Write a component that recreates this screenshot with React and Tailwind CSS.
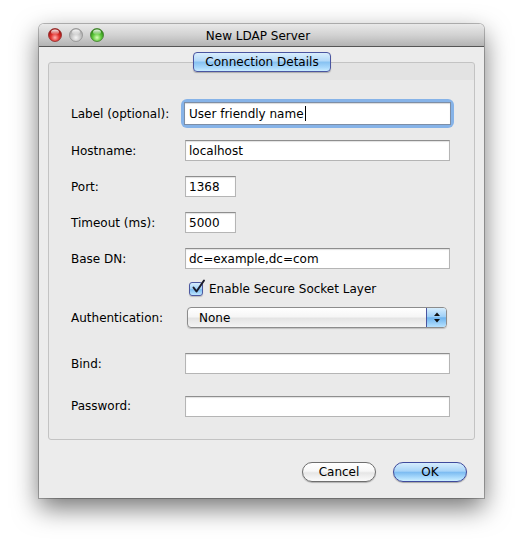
import React from "react";

function Light({ color }) {
  const c = {
    red: ["#ffb3b0", "#e0302c", "#a01412", "#8e2a28"],
    gray: ["#f4f4f4", "#c9c9c9", "#a9a9a9", "#8f8f8f"],
    green: ["#d8ffb8", "#5cc63a", "#2f8a16", "#3f7c2a"],
  }[color];
  const id = "g" + color;
  return (
    <svg width="14" height="14" viewBox="0 0 14 14">
      <defs>
        <radialGradient id={id} cx="50%" cy="70%" r="60%">
          <stop offset="0%" stopColor={c[0]} />
          <stop offset="55%" stopColor={c[1]} />
          <stop offset="100%" stopColor={c[2]} />
        </radialGradient>
        <linearGradient id={id + "h"} x1="0" y1="0" x2="0" y2="1">
          <stop offset="0%" stopColor="#ffffff" stopOpacity="0.95" />
          <stop offset="100%" stopColor="#ffffff" stopOpacity="0.1" />
        </linearGradient>
      </defs>
      <circle cx="7" cy="7" r="6.5" fill={`url(#${id})`} stroke={c[3]} strokeWidth="0.8" />
      <ellipse cx="7" cy="4" rx="4" ry="2.6" fill={`url(#${id}h)`} />
    </svg>
  );
}

function Field({ w = "w-[265px]", children, focused }) {
  if (focused) {
    return (
      <div className="w-[267px] h-[23px] -ml-px rounded-[3px] shadow-[0_0_0_3px_#86b3e8] flex items-center">
        <div className="w-full h-full bg-white border border-[#7d8ea6] flex items-center pl-[4px] shadow-[inset_0_1px_1px_rgba(0,0,0,0.15)]">
          {children}
        </div>
      </div>
    );
  }
  return (
    <div
      className={`${w} h-[21px] bg-white border border-[#b5b5b5] border-t-[#8e8e8e] flex items-center pl-[3px] shadow-[inset_0_1px_1px_rgba(0,0,0,0.12)]`}
    >
      {children}
    </div>
  );
}

function Label({ children }) {
  return <div className="w-[114px] shrink-0 text-[12px] text-black">{children}</div>;
}

export default function App() {
  const font = { fontFamily: '"DejaVu Sans", "Liberation Sans", sans-serif' };
  return (
    <div className="w-[523px] h-[553px] bg-white pl-[39px] pt-[24px]" style={font}>
      <div className="w-[445px] h-[474px] flex flex-col rounded-t-[5px] shadow-[0_10px_26px_rgba(0,0,0,0.55),0_0_0_1px_rgba(0,0,0,0.25)] overflow-hidden">
        {/* Title bar */}
        <div className="h-[23px] shrink-0 flex items-center pl-[9px] bg-[linear-gradient(#e9e9e9,#d2d2d2_50%,#b3b3b3)] border-b border-[#555555] relative">
          <div className="flex items-center gap-[7px]">
            <Light color="red" />
            <Light color="gray" />
            <Light color="green" />
          </div>
          <div className="flex-1 text-center text-[12px] text-black pr-[72px] pt-px">New LDAP Server</div>
        </div>

        {/* Content */}
        <div className="flex-1 bg-[#ececec] flex flex-col pt-[5px]">
          <div className="flex justify-center relative z-10 -mb-[10px] pl-[1px]">
            <div className="w-[138px] h-[20px] rounded-[4px] border border-[#4a55a0] bg-[linear-gradient(#d9eefd,#b2d8f8_45%,#86c1f1_50%,#a7d7fb_80%,#c8ecff)] flex items-center justify-center text-[12px] text-black shadow-[0_1px_1px_rgba(0,0,0,0.25)]">
              Connection Details
            </div>
          </div>

          <div className="mx-[9px] w-[427px] h-[378px] rounded-[3px] border border-[#c3c3c3] bg-[linear-gradient(#e3e3e3_0px,#e3e3e3_17px,#eaeaea_17px)] flex flex-col pl-[22px] pt-[40px]">
            <div className="flex items-center h-[21px]">
              <Label>Label (optional):</Label>
              <Field focused>
                <span className="text-[12px] text-black">User friendly name</span>
                <span className="w-px h-[15px] bg-black ml-px" />
              </Field>
            </div>
            <div className="flex items-center h-[21px] mt-[16px]">
              <Label>Hostname:</Label>
              <Field>
                <span className="text-[12px] text-black">localhost</span>
              </Field>
            </div>
            <div className="flex items-center h-[21px] mt-[15px]">
              <Label>Port:</Label>
              <Field w="w-[51px]">
                <span className="text-[12px] text-black">1368</span>
              </Field>
            </div>
            <div className="flex items-center h-[21px] mt-[15px]">
              <Label>Timeout (ms):</Label>
              <Field w="w-[51px]">
                <span className="text-[12px] text-black">5000</span>
              </Field>
            </div>
            <div className="flex items-center h-[21px] mt-[15px]">
              <Label>Base DN:</Label>
              <Field>
                <span className="text-[12px] text-black">dc=example,dc=com</span>
              </Field>
            </div>
            <div className="flex items-center h-[15px] mt-[12px] pl-[118px]">
              <div className="w-[14px] h-[14px] rounded-[3px] border border-[#4c58a0] bg-[linear-gradient(#d6edfd,#9fd0f7_50%,#7cbcf0_55%,#bfe6ff)] relative shadow-[0_1px_1px_rgba(0,0,0,0.2)]">
                <svg width="16" height="16" viewBox="0 0 16 16" className="absolute -top-[4px] left-[1px]">
                  <path d="M2.5 8.5 L5.5 12.5 L13 1.5" fill="none" stroke="#1b1b2a" strokeWidth="2" strokeLinecap="round" strokeLinejoin="round" />
                </svg>
              </div>
              <span className="ml-[6px] text-[12px] text-black">Enable Secure Socket Layer</span>
            </div>
            <div className="flex items-center h-[21px] mt-[11px]">
              <Label>Authentication:</Label>
              <div className="ml-[2px] w-[260px] h-[21px] rounded-[4px] border border-[#8c8c8c] bg-[linear-gradient(#ffffff,#f6f6f6_45%,#e4e4e4_55%,#f4f4f4)] flex items-center overflow-hidden shadow-[0_1px_1px_rgba(0,0,0,0.18)]">
                <span className="flex-1 pl-[11px] text-[12px] text-black">None</span>
                <div className="w-[20px] h-full border-l border-[#4a55a0] bg-[linear-gradient(#d6edfd,#9fd0f7_45%,#6fb4ee_52%,#b7e2ff)] flex items-center justify-center">
                  <svg width="8" height="13" viewBox="0 0 8 13">
                    <path d="M4 1.5 L7 5 L1 5 Z" fill="#111" />
                    <path d="M4 11.5 L7 8 L1 8 Z" fill="#111" />
                  </svg>
                </div>
              </div>
            </div>
            <div className="flex items-center h-[21px] mt-[25px]">
              <Label>Bind:</Label>
              <Field />
            </div>
            <div className="flex items-center h-[22px] mt-[21px]">
              <Label>Password:</Label>
              <Field />
            </div>
          </div>

          <div className="flex justify-end gap-[17px] pr-[17px] mt-[22px]">
            <div className="w-[74px] h-[20px] rounded-full border border-[#6e6e6e] bg-[linear-gradient(#ffffff,#f7f7f7_45%,#e6e6e6_55%,#fbfbfb)] flex items-center justify-center text-[12px] text-black shadow-[0_1px_1px_rgba(0,0,0,0.25)]">
              Cancel
            </div>
            <div className="w-[74px] h-[20px] rounded-full border border-[#3f4a9c] bg-[linear-gradient(#d6edfd,#a8d4f8_45%,#7dbcf1_52%,#a9dafc_80%,#ccefff)] flex items-center justify-center text-[12px] text-black shadow-[0_1px_1px_rgba(0,0,0,0.3)]">
              OK
            </div>
          </div>
        </div>
      </div>
    </div>
  );
}
